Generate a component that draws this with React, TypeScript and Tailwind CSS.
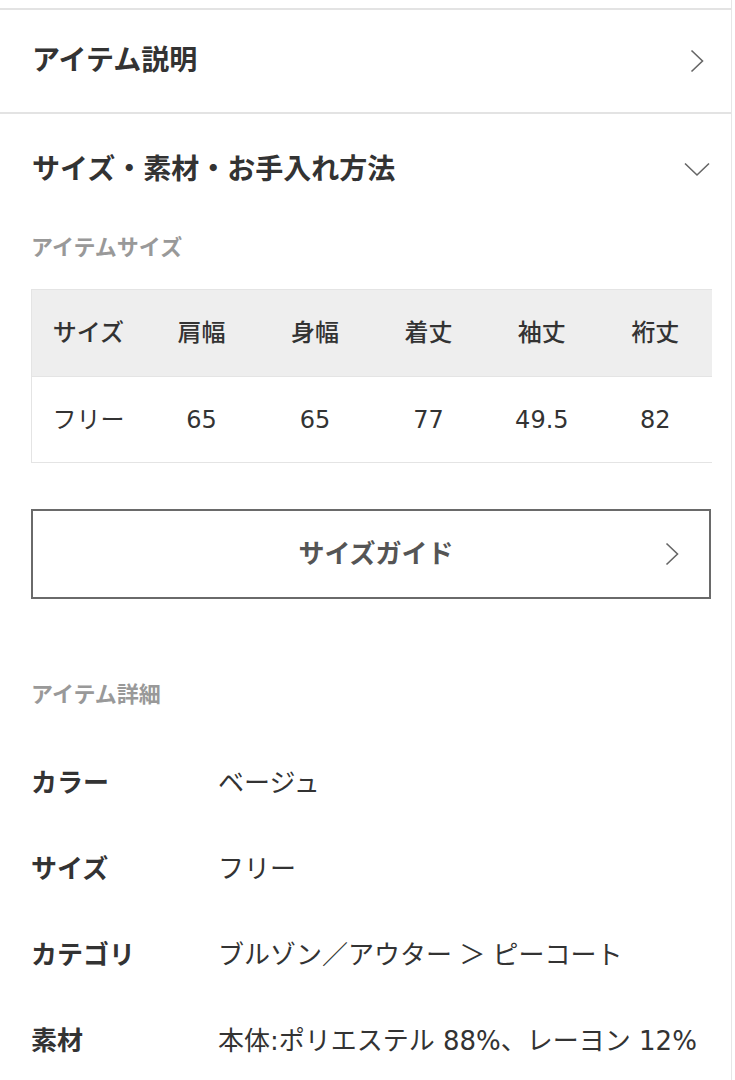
import type { ReactElement } from "react";

const FONT = {
  fontFamily: '"Liberation Sans", "Noto Sans CJK JP", sans-serif',
};

const NUM_FONT = {
  fontFamily: '"DejaVu Sans", "Noto Sans CJK JP", sans-serif',
};

const SIZE_HEADERS = ["サイズ", "肩幅", "身幅", "着丈", "袖丈", "裄丈"];
const SIZE_VALUES = ["フリー", "65", "65", "77", "49.5", "82"];

const DETAILS = [
  { label: "カラー", value: "ベージュ", num: false },
  { label: "サイズ", value: "フリー", num: false },
  { label: "カテゴリ", value: "ブルゾン／アウター ＞ ピーコート", num: false },
  { label: "素材", value: "本体:ポリエステル 88%、レーヨン 12%", num: true },
];

function ChevronRight({ className }: { className?: string }): ReactElement {
  return (
    <svg viewBox="0 0 14 24" className={className} fill="none">
      <path d="M1.5 1.5 L12.5 12 L1.5 22.5" stroke="#666" strokeWidth={1.6} />
    </svg>
  );
}

function ChevronDown({ className }: { className?: string }): ReactElement {
  return (
    <svg viewBox="0 0 26 15" className={className} fill="none">
      <path d="M1 1.5 L13 13 L25 1.5" stroke="#666" strokeWidth={1.6} />
    </svg>
  );
}

export default function App(): ReactElement {
  return (
    <div className="w-[735px] bg-white" style={FONT}>
      <div className="w-[732px] border-r border-[#e6e6e6]">
        <div className="h-[8px]" />

        {/* アイテム説明 */}
        <div className="flex h-[106px] items-center justify-between border-y-2 border-[#e3e3e3] pl-[32px] pr-[27px]">
          <span className="text-[28px] font-semibold text-[#333]">アイテム説明</span>
          <ChevronRight className="h-[24px] w-[14px]" />
        </div>

        {/* サイズ・素材・お手入れ方法 */}
        <div className="flex h-[105px] items-center justify-between pl-[32px] pr-[21px] pt-[6px]">
          <span className="text-[28px] font-semibold text-[#333]">
            サイズ・素材・お手入れ方法
          </span>
          <ChevronDown className="h-[15px] w-[26px]" />
        </div>

        <div className="pl-[31px] pr-[20px]">
          <div className="flex h-[56px] items-center text-[22px] font-bold text-[#999]">
            アイテムサイズ
          </div>

          <div className="mt-[14px] w-[681px] overflow-hidden">
            <table className="w-[681px] table-fixed border-collapse">
              <thead>
                <tr className="h-[87px] bg-[#eeeeee]">
                  {SIZE_HEADERS.map((h) => (
                    <th
                      key={h}
                      className="border-y border-[#e4e4e4] first:border-l text-center text-[24px] font-medium text-[#333]"
                    >
                      {h}
                    </th>
                  ))}
                </tr>
              </thead>
              <tbody>
                <tr className="h-[86px]">
                  {SIZE_VALUES.map((v, i) => (
                    <td
                      key={i}
                      className="border-b border-[#e4e4e4] first:border-l text-center text-[24px] text-[#333]"
                      style={i === 0 ? undefined : NUM_FONT}
                    >
                      {v}
                    </td>
                  ))}
                </tr>
              </tbody>
            </table>
          </div>

          <div className="relative mt-[46px] flex h-[90px] items-center justify-center border-2 border-[#6a6a6a]">
            <span className="pl-[10px] text-[26px] font-bold text-[#555]">サイズガイド</span>
            <ChevronRight className="absolute right-[30px] top-[31px] h-[24px] w-[14px]" />
          </div>

          <div className="mt-[76px] flex h-[38px] items-center text-[22px] font-bold text-[#999]">
            アイテム詳細
          </div>

          <div className="mt-[27px]">
            {DETAILS.map((d) => (
              <div key={d.label} className="flex h-[86px] items-center">
                <span className="w-[187px] shrink-0 text-[26px] font-bold text-[#333]">
                  {d.label}
                </span>
                <span
                  className="whitespace-nowrap text-[26px] text-[#333]"
                  style={d.num ? NUM_FONT : undefined}
                >
                  {d.value}
                </span>
              </div>
            ))}
          </div>
        </div>
      </div>
    </div>
  );
}
